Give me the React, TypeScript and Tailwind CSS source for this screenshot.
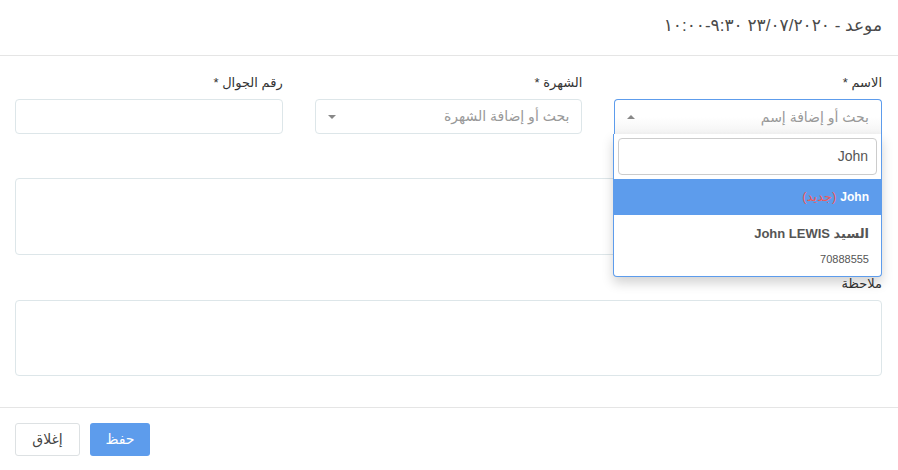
const inputStyle =
    "w-full h-[35px] rounded-[4px] border border-[#dde6e9] bg-white";

const labelStyle = "block h-[18px] mb-[7px] text-[13px] leading-[18px] font-normal text-[#333]";

const Caret = ({ up }: { up?: boolean }) => (
    <span
        className={
            up
                ? "w-0 h-0 border-x-[4px] border-x-transparent border-b-[4px] border-b-[#888]"
                : "w-0 h-0 border-x-[4px] border-x-transparent border-t-[4px] border-t-[#888]"
        }
    />
);

const NameSelect = () => {
    return (
        <div className="relative">
            <div className="h-[35px] rounded-t-[4px] border border-[#5d9cec] border-b-0 bg-gradient-to-b from-white from-50% to-[#f4f4f4] flex items-center justify-between px-[12px]">
                <span className="text-[14px] text-[#999]">بحث أو إضافة إسم</span>
                <Caret up />
            </div>

            {/*  Open dropdown  */}
            <div className="absolute z-10 top-[35px] -left-px right-0 bg-white border border-[#5d9cec] border-t-0 rounded-b-[4px] shadow-[0_6px_12px_rgba(0,0,0,0.175)]">
                <div className="p-[4px]">
                    <div className="h-[37px] rounded-[4px] border border-[#ccc] flex items-center px-[8px] text-[14px] text-[#555]">
                        John
                    </div>
                </div>
                <div className="h-[36px] bg-[#5d9cec] flex items-center px-[12px] text-[12px] font-bold text-white">
                    <span>John</span>
                    <span className="mr-[4px] font-normal text-[13px] text-[#f05b5b]">(جديد)</span>
                </div>
                <div className="h-[61px] px-[12px] pt-[11px] text-[#555]">
                    <div className="text-[13px] font-bold leading-[16px]">السيد John LEWIS</div>
                    <div className="text-[11px] leading-[14px] mt-[10px]">70888555</div>
                </div>
            </div>
        </div>
    );
};

const App = () => {
    return (
        <div
            dir="rtl"
            className="h-[470px] bg-white text-[#333] font-['Liberation_Sans','DejaVu_Sans',sans-serif] flex flex-col"
        >
            {/*  Header  */}
            <div className="h-[56px] border-b border-[#e5e5e5] flex items-center pb-[4px] pr-[16px] pl-[15px]">
                <h4 className="text-[17px] text-[#4a4a4a]">موعد - ٢٣/٠٧/٢٠٢٠ ٩:٣٠-١٠:٠٠</h4>
            </div>

            {/*  Body  */}
            <div className="flex-1 pt-[18px] pr-[16px] pl-[15px]">
                <div className="grid grid-cols-3 gap-x-[32px] mb-[19px]">
                    <div>
                        <label className={labelStyle}>الاسم *</label>
                        <NameSelect />
                    </div>
                    <div>
                        <label className={labelStyle}>الشهرة *</label>
                        <div className="h-[35px] rounded-[4px] border border-[#dde6e9] flex items-center justify-between px-[12px]">
                            <span className="text-[14px] text-[#999]">بحث أو إضافة الشهرة</span>
                            <Caret />
                        </div>
                    </div>
                    <div>
                        <label className={labelStyle}>رقم الجوال *</label>
                        <input className={inputStyle} />
                    </div>
                </div>

                {/* label of this field is hidden under the open dropdown */}
                <div className="mb-[20px]">
                    <div className="h-[18px] mb-[7px]" />
                    <textarea className="block w-full h-[77px] rounded-[4px] border border-[#dde6e9] resize-none" />
                </div>

                <div>
                    <label className={labelStyle}>ملاحظة</label>
                    <textarea className="block w-full h-[76px] rounded-[4px] border border-[#dde6e9] resize-none" />
                </div>
            </div>

            {/*  Footer  */}
            <div className="h-[63px] border-t border-[#e5e5e5] flex items-start pt-[15px] gap-[10px] justify-end pl-[15px]">
                <button className="h-[33px] w-[60px] rounded-[3px] bg-[#5d9cec] text-white text-[14px]">
                    حفظ
                </button>
                <button className="h-[33px] w-[65px] rounded-[3px] border border-[#dde1e3] bg-white text-[#444] text-[14px]">
                    إغلاق
                </button>
            </div>
        </div>
    );
};

export default App;
